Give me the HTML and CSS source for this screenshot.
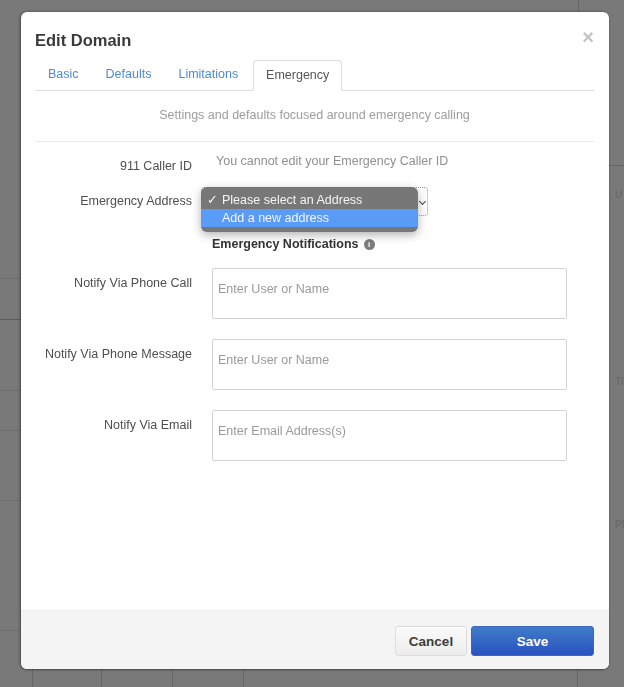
FILE: index.html
```html
<!DOCTYPE html>
<html lang="en">
<head>
<meta charset="utf-8">
<title>Edit Domain</title>
<link rel="stylesheet" href="styles.css">
</head>
<body>
<div class="backdrop">
  <span class="bg-text bg-u">U</span>
  <span class="bg-text bg-ti">TI</span>
  <span class="bg-text bg-pi">PI</span>
</div>
<main class="modal">
  <header class="modal-head">
    <h1 class="title">Edit Domain</h1>
    <span class="close">×</span>
  </header>
  <nav class="tabs">
    <a class="tab tab-basic">Basic</a>
    <a class="tab tab-defaults">Defaults</a>
    <a class="tab tab-limits">Limitations</a>
    <a class="tab tab-active">Emergency</a>
  </nav>
  <p class="intro">Settings and defaults focused around emergency calling</p>
  <section class="form">
    <div class="row row-caller">
      <label class="label">911 Caller ID</label>
      <span class="static">You cannot edit your Emergency Caller ID</span>
    </div>
    <div class="row row-address">
      <label class="label">Emergency Address</label>
      <div class="select-wrap">
        <div class="select-box"><span class="caret"></span></div>
        <div class="menu">
          <div class="opt opt-checked"><span class="check">✓</span>Please select an Address</div>
          <div class="opt opt-hover">Add a new address</div>
        </div>
      </div>
    </div>
    <div class="subhead">
      <strong>Emergency Notifications</strong>
      <span class="info">i</span>
    </div>
    <div class="row row-area">
      <label class="label">Notify Via Phone Call</label>
      <textarea class="area" placeholder="Enter User or Name"></textarea>
    </div>
    <div class="row row-area">
      <label class="label">Notify Via Phone Message</label>
      <textarea class="area" placeholder="Enter User or Name"></textarea>
    </div>
    <div class="row row-area">
      <label class="label">Notify Via Email</label>
      <textarea class="area" placeholder="Enter Email Address(s)"></textarea>
    </div>
  </section>
  <footer class="foot">
    <button class="btn btn-cancel">Cancel</button>
    <button class="btn btn-save">Save</button>
  </footer>
</main>
</body>
</html>
```
FILE: styles.css
```css
* { box-sizing: border-box; }
html, body { height: 100%; }
body {
  margin: 0;
  padding: 12px 15px 18px 21px;
  overflow: hidden;
  background-color: #797979;
  font-family: "Liberation Sans", Arial, sans-serif;
  font-size: 12.5px;
  color: #4a4a4a;
}
.backdrop {
  position: fixed;
  inset: 0;
  background-color: #797979;
  background-image:
    linear-gradient(#6f6f6f, #6f6f6f),
    linear-gradient(#5f5f5f, #5f5f5f),
    linear-gradient(#6f6f6f, #6f6f6f),
    linear-gradient(#6f6f6f, #6f6f6f),
    linear-gradient(#6f6f6f, #6f6f6f),
    linear-gradient(#6f6f6f, #6f6f6f),
    linear-gradient(#666, #666),
    linear-gradient(#666, #666),
    linear-gradient(#666, #666),
    linear-gradient(#666, #666),
    linear-gradient(#666, #666),
    linear-gradient(#666, #666),
    linear-gradient(#666, #666);
  background-repeat: no-repeat;
  background-size:
    21px 1px, 21px 1px, 21px 1px, 21px 1px, 21px 1px, 21px 1px,
    1px 18px, 1px 18px, 1px 18px, 1px 18px, 1px 18px,
    15px 1px, 1px 12px;
  background-position:
    0 278px, 0 319px, 0 390px, 0 430px, 0 500px, 0 630px,
    32px 669px, 101px 669px, 172px 669px, 243px 669px, 577px 669px,
    609px 165px, 578px 0;
}
.bg-text {
  position: absolute;
  left: 615px;
  font-size: 10px;
  font-weight: 700;
  color: #6a6a6a;
}
.bg-u { top: 189px; }
.bg-ti { top: 376px; }
.bg-pi { top: 519px; }
.modal {
  position: relative;
  height: 100%;
  display: flex;
  flex-direction: column;
  background: #fff;
  border-radius: 6px;
  box-shadow: -1px 0 3px rgba(0,0,0,.35), 0 1px 2px rgba(0,0,0,.3);
}
.modal-head {
  display: flex;
  justify-content: space-between;
  align-items: flex-start;
  padding: 18px 15px 0 14px;
  height: 48px;
}
.title {
  margin: 0;
  font-size: 16.5px;
  line-height: 20px;
  font-weight: 700;
  color: #3a3a3a;
}
.close {
  margin-top: -3px;
  font-size: 20px;
  font-weight: 700;
  line-height: 20px;
  color: #c4c4c4;
}
.tabs {
  display: flex;
  margin: 0 15px 0 14px;
  height: 31px;
  border-bottom: 1px solid #dcdcdc;
  padding-left: 13px;
}
.tab {
  height: 31px;
  line-height: 29px;
  color: #4d8ad6;
}
.tab-basic { margin-right: 27px; }
.tab-defaults { margin-right: 27px; }
.tab-limits { margin-right: 15px; }
.tab-active {
  width: 89px;
  text-align: center;
  color: #555;
  background: #fff;
  border: 1px solid #dcdcdc;
  border-bottom-color: #fff;
  border-radius: 4px 4px 0 0;
}
.intro {
  margin: 0 15px 0 14px;
  height: 51px;
  padding-top: 17px;
  line-height: 15px;
  text-align: center;
  color: #9d9d9d;
  border-bottom: 1px solid #e8e8e8;
}
.form {
  flex: 1;
  padding-top: 10px;
}
.row {
  display: flex;
  align-items: flex-start;
}
.label {
  flex: none;
  width: 171px;
  text-align: right;
  line-height: 16px;
  color: #4f4f4f;
}
.row-caller { height: 35px; }
.row-caller .label { padding-top: 6px; }
.static {
  margin-left: 24px;
  line-height: 16px;
  padding-top: 1px;
  color: #8f8f8f;
}
.row-address { height: 49px; }
.row-address .label { padding-top: 6px; }
.select-wrap {
  position: relative;
  margin-left: 9px;
  width: 227px;
  height: 29px;
}
.select-box {
  height: 29px;
  border: 1px dotted #9a9a9a;
  border-radius: 3px;
}
.caret {
  position: absolute;
  right: 3px;
  top: 12px;
  width: 5px;
  height: 5px;
  border-right: 1.5px solid #444;
  border-bottom: 1.5px solid #444;
  transform: rotate(45deg);
}
.menu {
  position: absolute;
  left: 0;
  top: 0;
  width: 217px;
  height: 45px;
  padding-top: 4px;
  background: #777;
  border-radius: 6px;
  box-shadow: 0 3px 10px rgba(0,0,0,.3);
  color: #f4f4f4;
  font-size: 12.5px;
}
.opt {
  position: relative;
  height: 18px;
  line-height: 18px;
  padding-left: 21px;
}
.check {
  position: absolute;
  left: 6px;
  top: 0;
}
.opt-hover { background: #5b9bf8; color: #f2f6ff; }
.subhead {
  display: flex;
  align-items: center;
  gap: 5px;
  height: 16px;
  margin-left: 191px;
  margin-bottom: 16px;
  font-size: 12.5px;
  color: #333;
}
.info {
  width: 11px;
  height: 11px;
  border-radius: 50%;
  background: #7d7d7d;
  color: #fff;
  font-size: 8px;
  font-weight: 700;
  line-height: 11px;
  text-align: center;
}
.row-area { height: 71px; }
.row-area .label { padding-top: 7px; }
.area {
  display: block;
  margin: 0 0 0 20px;
  width: 355px;
  height: 51px;
  padding: 12px 5px;
  border: 1px solid #d4d4d4;
  border-radius: 2px;
  background: #fff;
  resize: none;
  outline: none;
  font: 12.5px/16px "Liberation Sans", Arial, sans-serif;
}
.area::placeholder { color: #9a9a9a; opacity: 1; }
.foot {
  display: flex;
  justify-content: flex-end;
  gap: 4px;
  height: 59px;
  padding: 15px 15px 0 0;
  background: #f4f4f4;
  border-top: 1px solid #ececec;
  border-radius: 0 0 6px 6px;
}
.btn {
  height: 30px;
  border-radius: 3px;
  font: 700 13.5px "Liberation Sans", Arial, sans-serif;
}
.btn-cancel {
  width: 72px;
  color: #3c3c3c;
  border: 1px solid #dcdcdc;
  background: linear-gradient(#fafafa, #ececec);
}
.btn-save {
  width: 123px;
  color: #fff;
  border: 1px solid #3a66bb;
  background: linear-gradient(#3f7cc8, #2a52c0);
}
```
